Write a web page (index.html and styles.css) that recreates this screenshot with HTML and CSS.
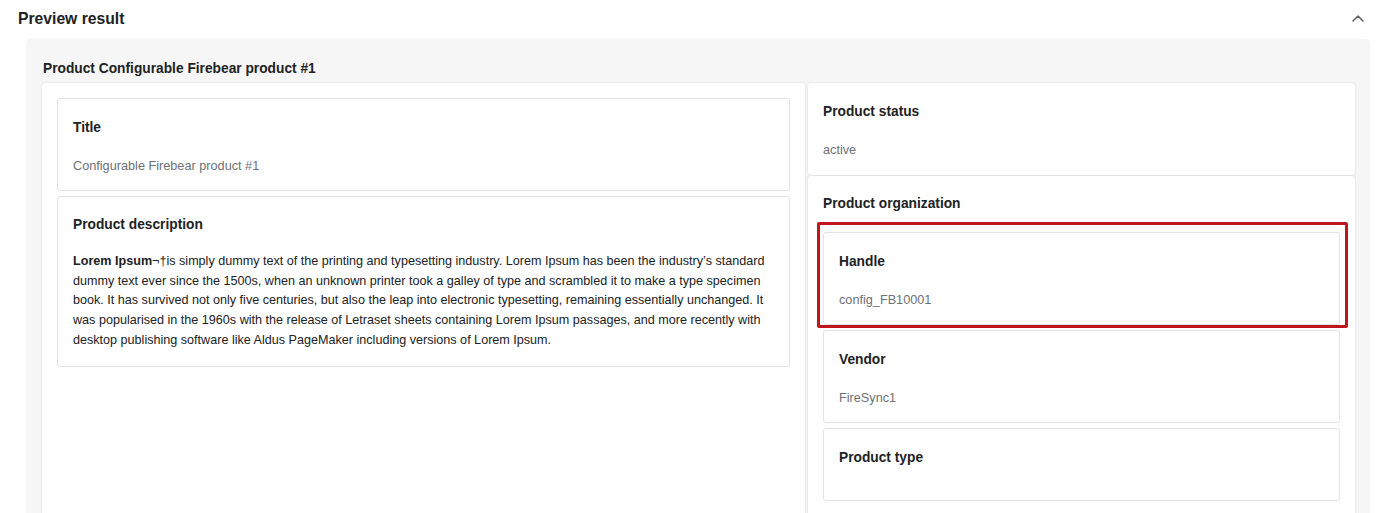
FILE: index.html
```html
<!DOCTYPE html>
<html lang="en">
<head>
<meta charset="utf-8">
<title>Preview result</title>
<link rel="stylesheet" href="styles.css">
</head>
<body>
<section class="preview">
  <header class="preview-header">
    <h2 class="preview-title">Preview result</h2>
    <button class="collapse-btn" type="button" aria-label="Collapse">
      <svg width="12" height="7" viewBox="0 0 12 7"><polyline points="1,6 6,1 11,6" fill="none" stroke="#5c5f62" stroke-width="1.5" stroke-linecap="round" stroke-linejoin="round"/></svg>
    </button>
  </header>
  <div class="panel">
    <h3 class="panel-title">Product Configurable Firebear product #1</h3>
    <div class="columns">
      <div class="card main-card">
        <div class="fields">
          <div class="field">
            <div class="field-title">Title</div>
            <div class="field-value">Configurable Firebear product #1</div>
          </div>
          <div class="field desc-field">
            <div class="field-title">Product description</div>
            <p class="desc"><strong>Lorem Ipsum</strong>¬†is simply dummy text of the printing and typesetting industry. Lorem Ipsum has been the industry’s standard<br>dummy text ever since the 1500s, when an unknown printer took a galley of type and scrambled it to make a type specimen<br>book. It has survived not only five centuries, but also the leap into electronic typesetting, remaining essentially unchanged. It<br>was popularised in the 1960s with the release of Letraset sheets containing Lorem Ipsum passages, and more recently with<br>desktop publishing software like Aldus PageMaker including versions of Lorem Ipsum.</p>
          </div>
        </div>
      </div>
      <div class="side">
        <div class="card side-card status-card">
          <div class="field-title">Product status</div>
          <div class="field-value">active</div>
        </div>
        <div class="card side-card org-card">
          <div class="field-title org-title">Product organization</div>
          <div class="fields">
            <div class="field highlighted">
              <div class="field-title">Handle</div>
              <div class="field-value">config_FB10001</div>
              <span class="highlight-mark"></span>
            </div>
            <div class="field">
              <div class="field-title">Vendor</div>
              <div class="field-value">FireSync1</div>
            </div>
            <div class="field">
              <div class="field-title">Product type</div>
              <div class="field-value"></div>
            </div>
          </div>
        </div>
      </div>
    </div>
  </div>
</section>
</body>
</html>
```
FILE: styles.css
```css
* { box-sizing: border-box; }

html, body {
  margin: 0;
  background: #ffffff;
  font-family: "Liberation Sans", Arial, sans-serif;
  color: #202223;
  overflow: hidden;
}

.preview-header {
  display: flex;
  justify-content: space-between;
  align-items: center;
  padding: 7px 31px 0 18px;
  height: 31px;
}

.preview-title {
  margin: 0;
  font-size: 15.7px;
  line-height: 24px;
  font-weight: 700;
  color: #202223;
}

.collapse-btn {
  display: flex;
  align-items: center;
  justify-content: center;
  width: 14px;
  height: 24px;
  padding: 0;
  border: 0;
  background: transparent;
  margin-top: -2px;
}

.panel {
  margin: 9px 27px 0 27px;
  padding: 17px 14px 0 15px;
  background: #f6f6f7;
  border-radius: 4px 4px 0 0;
  box-shadow: 0 0 2px rgba(0, 0, 0, 0.14);
  min-height: 520px;
}

.panel-title {
  margin: 0 0 2px 0;
  padding-left: 1px;
  font-size: 13.75px;
  line-height: 24px;
  font-weight: 700;
}

.columns {
  display: grid;
  grid-template-columns: minmax(0, 763fr) minmax(0, 547fr);
  gap: 3px;
  min-height: 460px;
}

.card {
  background: #ffffff;
  border-radius: 3px;
  box-shadow: 0 0 2px rgba(0, 0, 0, 0.16);
}

.main-card {
  padding: 15px;
}

.fields {
  display: flex;
  flex-direction: column;
  gap: 5px;
}

.field {
  position: relative;
  border: 1px solid #e1e3e5;
  border-radius: 3px;
  padding: 17px 15px 14px;
}

.field-title {
  font-size: 13.75px;
  line-height: 24px;
  font-weight: 700;
  color: #202223;
  margin-bottom: 16px;
}

.field-value {
  font-size: 12.7px;
  line-height: 20px;
  color: #6d7175;
}

.desc-field {
  padding-top: 16px;
  padding-bottom: 15px;
}

.desc-field .field-title {
  margin-bottom: 15px;
}

.desc {
  margin: 3px 0 0 0;
  font-size: 12.6px;
  line-height: 19.7px;
  color: #202223;
  white-space: nowrap;
}

.desc strong { font-weight: 700; }

.side {
  display: flex;
  flex-direction: column;
  gap: 1px;
}

.side-card {
  padding: 16px 15px;
}

.status-card {
  padding-top: 17px;
  padding-bottom: 15px;
}

.side-card > .field-title {
  margin-bottom: 16px;
}

.org-card {
  flex: 1;
  padding-bottom: 15px;
}

.highlight-mark {
  position: absolute;
  top: -11px;
  left: -7px;
  right: -9px;
  bottom: -4px;
  border: 3px solid #c0151d;
  border-radius: 2px;
  pointer-events: none;
}
```
